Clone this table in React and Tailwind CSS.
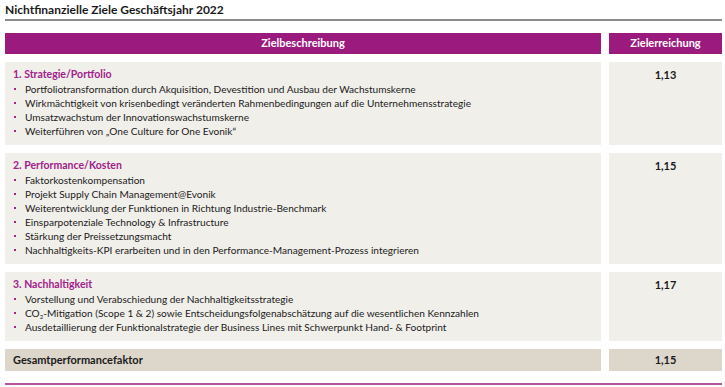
const rows = [
  {
    title: "1. Strategie/Portfolio",
    value: "1,13",
    items: [
      "Portfoliotransformation durch Akquisition, Devestition und Ausbau der Wachstumskerne",
      "Wirkmächtigkeit von krisenbedingt veränderten Rahmenbedingungen auf die Unternehmensstrategie",
      "Umsatzwachstum der Innovationswachstumskerne",
      "Weiterführen von „One Culture for One Evonik“",
    ],
  },
  {
    title: "2. Performance/Kosten",
    value: "1,15",
    items: [
      "Faktorkostenkompensation",
      "Projekt Supply Chain Management@Evonik",
      "Weiterentwicklung der Funktionen in Richtung Industrie-Benchmark",
      "Einsparpotenziale Technology & Infrastructure",
      "Stärkung der Preissetzungsmacht",
      "Nachhaltigkeits-KPI erarbeiten und in den Performance-Management-Prozess integrieren",
    ],
  },
  {
    title: "3. Nachhaltigkeit",
    value: "1,17",
    items: [
      "Vorstellung und Verabschiedung der Nachhaltigkeitsstrategie",
      <>CO<sub className="text-[6px] align-baseline relative top-[2px]">2</sub>-Mitigation (Scope 1 &amp; 2) sowie Entscheidungsfolgenabschätzung auf die wesentlichen Kennzahlen</>,
      "Ausdetaillierung der Funktionalstrategie der Business Lines mit Schwerpunkt Hand- & Footprint",
    ],
  },
];

export default function App() {
  return (
    <div className="w-[725px] h-[387px] bg-white pl-[5px] pr-[3px] pt-[1px] text-[#1a1a1a]" style={{ fontFamily: "Lato, 'Open Sans', sans-serif" }}>
      <h1 className="text-[12px] font-bold leading-[15px] h-[18px] pt-[1px]">Nichtfinanzielle Ziele Geschäftsjahr 2022</h1>
      <div className="h-[2px] bg-[#8c8c8c] mb-[12px]" />
      <div className="grid grid-cols-[596px_113px] gap-x-[8px] gap-y-[8px]">
        <div className="bg-[#9b1a7e] h-[21px] flex items-center justify-center text-white text-[11px] font-bold">Zielbeschreibung</div>
        <div className="bg-[#9b1a7e] h-[21px] flex items-center justify-center text-white text-[11px] font-bold">Zielerreichung</div>
        {rows.map((r) => (
          <Row key={r.value + r.title} r={r} />
        ))}
        <div className="bg-[#ddd6cb] h-[22px] flex items-center pl-[8px] text-[11px] font-bold">Gesamtperformancefaktor</div>
        <div className="bg-[#ddd6cb] h-[22px] flex items-center justify-center text-[11px] font-bold">1,15</div>
      </div>
      <div className="h-[2px] bg-[#b4529f] mt-[12px]" />
    </div>
  );
}

function Row({ r }) {
  return (
    <>
      <div className="bg-[#f1efea] pl-[8px] pt-[5px] pb-[7px]">
        <div className="text-[10.5px] font-bold text-[#a0228a] leading-[15px]">{r.title}</div>
        <ul>
          {r.items.map((it, i) => (
            <li key={i} className="flex items-center text-[10.1px] leading-[14px]">
              <span className="w-[2px] h-[2px] bg-[#a0228a] ml-[1px] mr-[9px] shrink-0" />
              <span>{it}</span>
            </li>
          ))}
        </ul>
      </div>
      <div className="bg-[#f1efea] pt-[5px] text-center text-[11px] font-bold leading-[15px]">{r.value}</div>
    </>
  );
}
